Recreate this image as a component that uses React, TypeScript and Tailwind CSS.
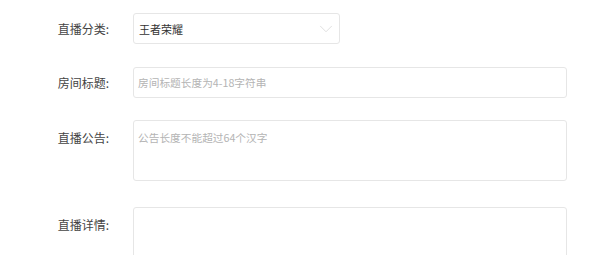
import { ChevronDown } from 'lucide-react';

const font = { fontFamily: '"Noto Sans CJK SC", "Noto Sans", sans-serif' };

function Label({ children, className = '' }: { children: string; className?: string }) {
  return (
    <div className={`w-[110px] shrink-0 pr-[1px] text-right text-[12px] leading-[18px] text-[#444] ${className}`}>
      {children}
    </div>
  );
}

export default function App() {
  return (
    <div className="w-[600px] h-[255px] overflow-hidden bg-white pt-[13px]" style={font}>
      <div className="flex items-center">
        <Label>直播分类:</Label>
        <div className="ml-[23px] flex h-[31px] w-[207px] items-center justify-between rounded-[3px] border border-[#e6e6e6] pl-[5px] pr-[2px]">
          <span className="text-[11px] leading-[16px] text-[#333]">王者荣耀</span>
          <ChevronDown className="size-[22px] text-[#d4d4d4]" strokeWidth={0.8} />
        </div>
      </div>

      <div className="mt-[23px] flex items-center">
        <Label>房间标题:</Label>
        <div className="ml-[23px] flex h-[31px] w-[434px] items-center rounded-[3px] border border-[#e6e6e6] pl-[4px]">
          <span className="text-[10.7px] leading-[16px] text-[#b4b4b4]">房间标题长度为4-18字符串</span>
        </div>
      </div>

      <div className="mt-[22px] flex items-start">
        <Label className="mt-[9px]">直播公告:</Label>
        <div className="ml-[23px] h-[61px] w-[434px] rounded-[3px] border border-[#e6e6e6] pl-[4px] pt-[9px]">
          <div className="text-[10.7px] leading-[16px] text-[#b4b4b4]">公告长度不能超过64个汉字</div>
        </div>
      </div>

      <div className="mt-[26px] flex items-start">
        <Label className="mt-[9px]">直播详情:</Label>
        <div className="ml-[23px] h-[80px] w-[434px] rounded-[3px] border border-[#e6e6e6]" />
      </div>
    </div>
  );
}
